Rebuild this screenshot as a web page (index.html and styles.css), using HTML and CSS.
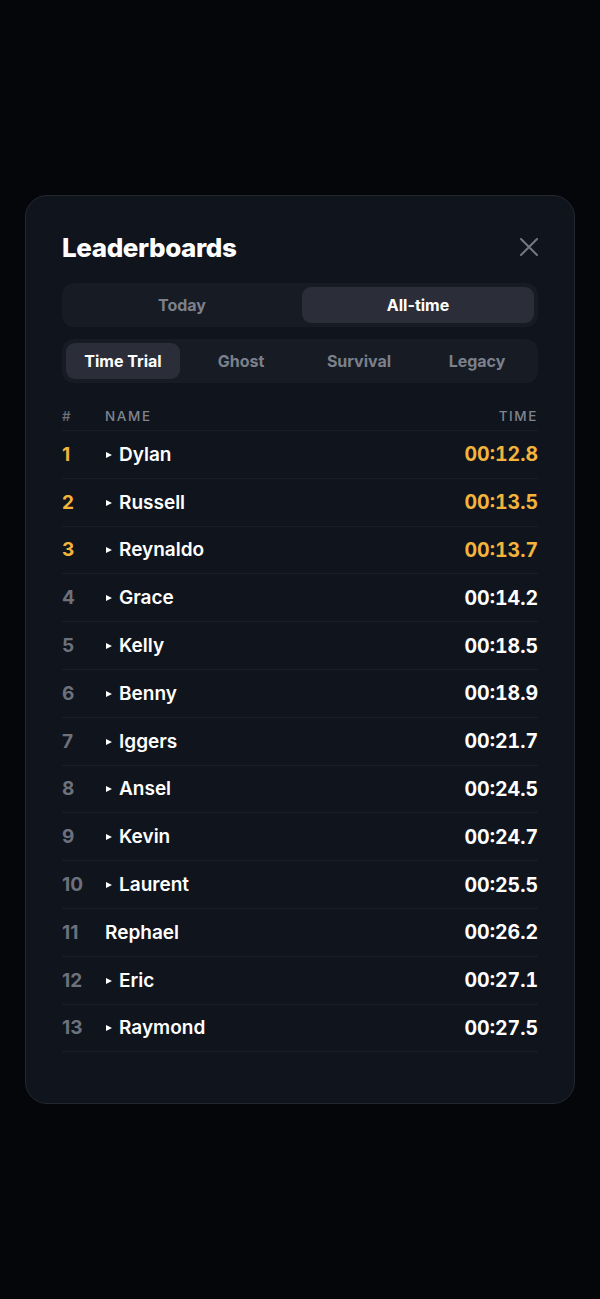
FILE: index.html
```html
<!DOCTYPE html>
<html>
<head>
	<title>Leaderboards</title>
	<link rel="stylesheet" href="styles.css">
</head>
<body>
	<div class="modal">
		<div class="modal-head">
			<h2>Leaderboards</h2>
			<button class="close" aria-label="Close">
				<svg width="20" height="20" viewBox="0 0 20 20">
					<path d="M2 2 L18 18 M18 2 L2 18" stroke="currentColor" stroke-width="2" stroke-linecap="round"/>
				</svg>
			</button>
		</div>

		<div class="segmented two">
			<button>Today</button>
			<button class="active">All-time</button>
		</div>

		<div class="segmented four">
			<button class="active">Time Trial</button>
			<button>Ghost</button>
			<button>Survival</button>
			<button>Legacy</button>
		</div>

		<div class="table">
			<div class="row head">
				<span class="rank">#</span>
				<span class="name">Name</span>
				<span class="time">Time</span>
			</div>
			<div class="row top"><span class="rank">1</span><span class="name replay">Dylan</span><span class="time">00:12.8</span></div>
			<div class="row top"><span class="rank">2</span><span class="name replay">Russell</span><span class="time">00:13.5</span></div>
			<div class="row top"><span class="rank">3</span><span class="name replay">Reynaldo</span><span class="time">00:13.7</span></div>
			<div class="row"><span class="rank">4</span><span class="name replay">Grace</span><span class="time">00:14.2</span></div>
			<div class="row"><span class="rank">5</span><span class="name replay">Kelly</span><span class="time">00:18.5</span></div>
			<div class="row"><span class="rank">6</span><span class="name replay">Benny</span><span class="time">00:18.9</span></div>
			<div class="row"><span class="rank">7</span><span class="name replay">Iggers</span><span class="time">00:21.7</span></div>
			<div class="row"><span class="rank">8</span><span class="name replay">Ansel</span><span class="time">00:24.5</span></div>
			<div class="row"><span class="rank">9</span><span class="name replay">Kevin</span><span class="time">00:24.7</span></div>
			<div class="row"><span class="rank">10</span><span class="name replay">Laurent</span><span class="time">00:25.5</span></div>
			<div class="row"><span class="rank">11</span><span class="name">Rephael</span><span class="time">00:26.2</span></div>
			<div class="row"><span class="rank">12</span><span class="name replay">Eric</span><span class="time">00:27.1</span></div>
			<div class="row"><span class="rank">13</span><span class="name replay">Raymond</span><span class="time">00:27.5</span></div>
		</div>
	</div>
</body>
</html>
```

FILE: styles.css
```css
/* Dark leaderboard modal */
body {
	margin: 0;
	background: #05060a;
	font-family: Inter, "Noto Sans", sans-serif;
	color: #fff;
}

.modal {
	box-sizing: border-box;
	width: 550px;
	height: 909px;
	margin: 195px auto 0;
	padding: 36px 36px 0 36px;
	background: #10141d;
	border: 1px solid #23272f;
	border-radius: 22px;
}

.modal-head {
	display: flex;
	align-items: center;
	justify-content: space-between;
	height: 30px;
}

.modal-head h2 {
	margin: 0;
	font-size: 26px;
	font-weight: 800;
	letter-spacing: -0.4px;
}

.close {
	background: none;
	border: none;
	padding: 0;
	margin-right: -1px;
	color: #737884;
	display: flex;
	cursor: pointer;
}

.segmented {
	display: grid;
	height: 44px;
	box-sizing: border-box;
	padding: 4px;
	gap: 4px;
	background: #171b24;
	border-radius: 12px;
}

.segmented.two {
	grid-template-columns: 1fr 1fr;
	margin-top: 21px;
}

.segmented.four {
	grid-template-columns: repeat(4, 1fr);
	margin-top: 12px;
}

.segmented button {
	border: none;
	background: none;
	border-radius: 9px;
	font-family: inherit;
	font-size: 16px;
	font-weight: 700;
	color: #7b808b;
	cursor: pointer;
}

.segmented button.active {
	background: #2b2e39;
	color: #fff;
}

.table {
	margin-top: 16px;
}

.row {
	display: flex;
	align-items: center;
	height: 47.8px;
	box-sizing: border-box;
	border-bottom: 1px solid #1a1e27;
	font-size: 19px;
	font-weight: 600;
}

.row.head {
	height: 32px;
	padding-top: 2px;
	font-size: 13.5px;
	font-weight: 500;
	letter-spacing: 1.6px;
	text-transform: uppercase;
	color: #80848e;
}

.rank {
	width: 43px;
	color: #6c717c;
	font-weight: 700;
}

.head .rank {
	color: #6c717c;
	font-weight: 500;
}

.name {
	flex: 1;
	display: flex;
	align-items: center;
}

.name.replay::before {
	content: "";
	width: 0;
	height: 0;
	margin: 1px 7px 0 1px;
	border-left: 6px solid #fff;
	border-top: 3.5px solid transparent;
	border-bottom: 3.5px solid transparent;
}

.time {
	font-size: 19.5px;
	font-weight: 700;
	font-variant-numeric: tabular-nums;
	text-align: right;
}

.head .time {
	font-size: 13.5px;
	font-weight: 500;
}

.top .rank,
.top .time {
	color: #f4b43c;
}
```
